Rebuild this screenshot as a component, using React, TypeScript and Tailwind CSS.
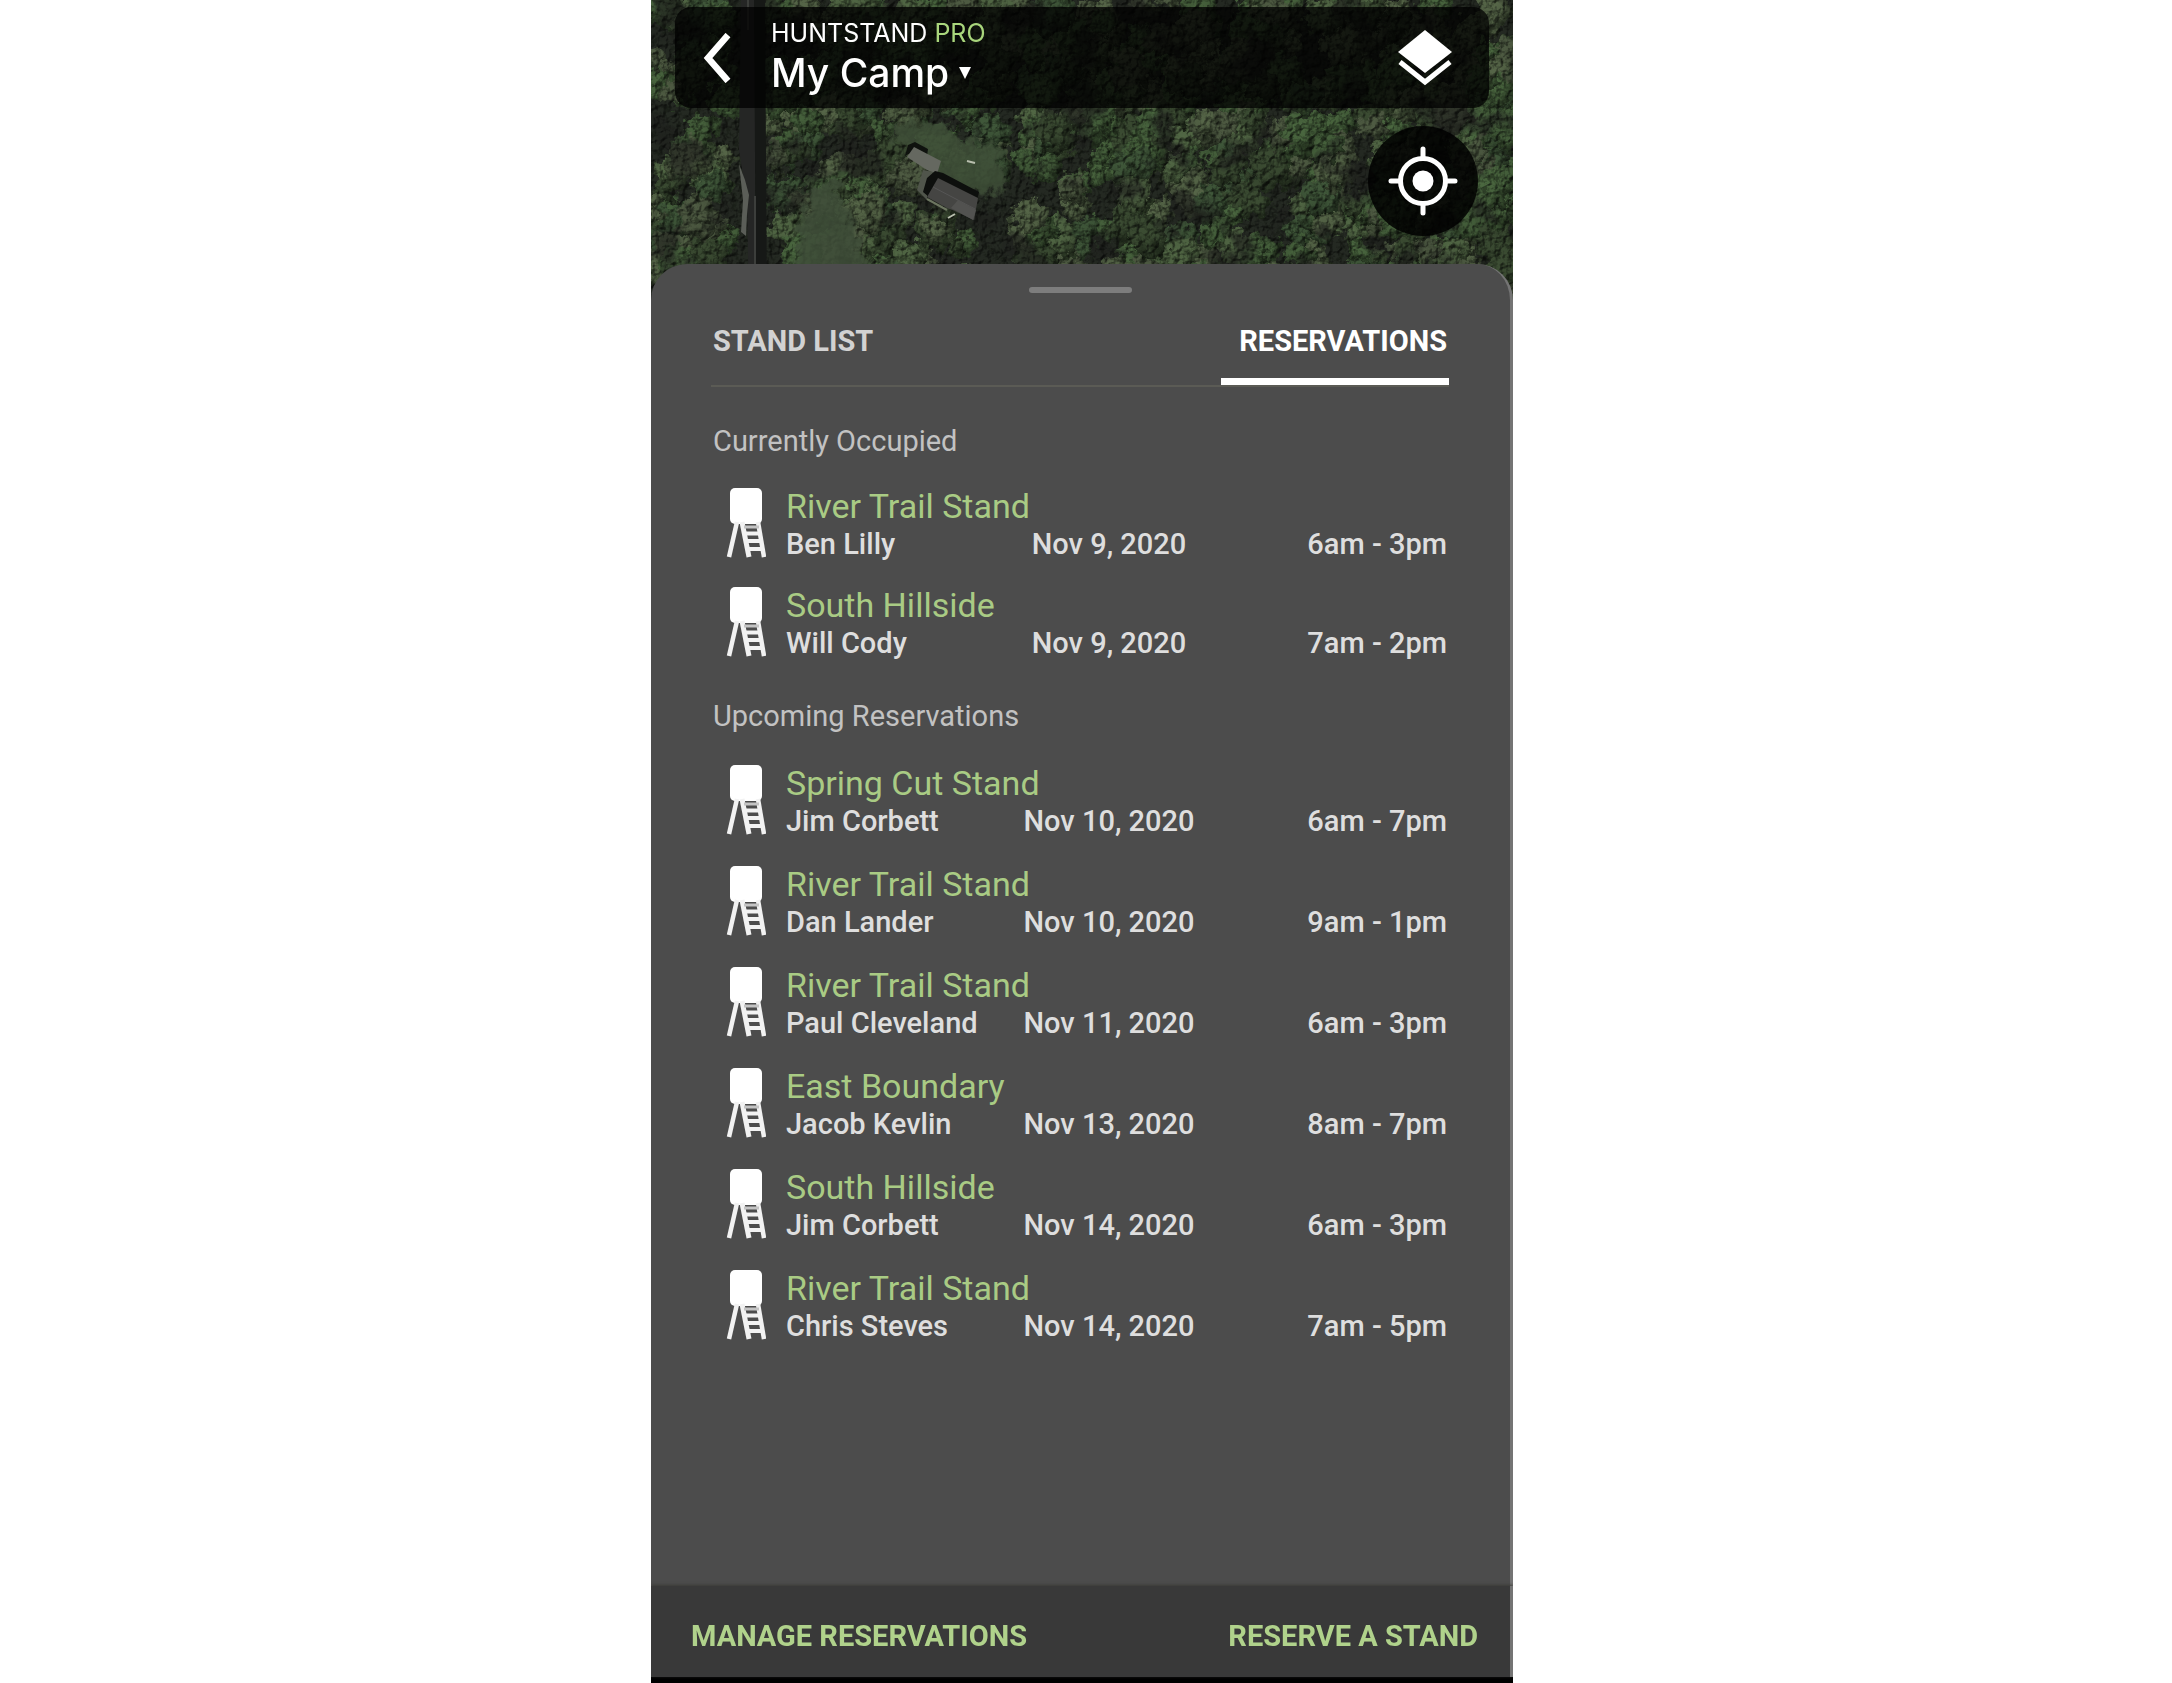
import React from "react";

type Reservation = { stand: string; hunter: string; date: string; time: string };

const occupied: Reservation[] = [
  { stand: "River Trail Stand", hunter: "Ben Lilly", date: "Nov 9, 2020", time: "6am - 3pm" },
  { stand: "South Hillside", hunter: "Will Cody", date: "Nov 9, 2020", time: "7am - 2pm" },
];

const upcoming: Reservation[] = [
  { stand: "Spring Cut Stand", hunter: "Jim Corbett", date: "Nov 10, 2020", time: "6am - 7pm" },
  { stand: "River Trail Stand", hunter: "Dan Lander", date: "Nov 10, 2020", time: "9am - 1pm" },
  { stand: "River Trail Stand", hunter: "Paul Cleveland", date: "Nov 11, 2020", time: "6am - 3pm" },
  { stand: "East Boundary", hunter: "Jacob Kevlin", date: "Nov 13, 2020", time: "8am - 7pm" },
  { stand: "South Hillside", hunter: "Jim Corbett", date: "Nov 14, 2020", time: "6am - 3pm" },
  { stand: "River Trail Stand", hunter: "Chris Steves", date: "Nov 14, 2020", time: "7am - 5pm" },
];

// Small seeded generator so the canopy looks the same on every load.
function makeRandom(seed: number) {
  let s = seed;
  return () => {
    s = (s * 1664525 + 1013904223) % 4294967296;
    return s / 4294967296;
  };
}

const canopyColors = ["#4b6840", "#46613c", "#526845", "#40583a", "#4f5c43", "#566648", "#3c4d33"];

function buildCanopy() {
  const rnd = makeRandom(42);
  const trees: { x: number; y: number; r: number; c: string }[] = [];
  for (let i = 0; i < 640; i++) {
    const x = rnd() * 862;
    const y = rnd() * 310;
    const r = 9 + rnd() * 13;
    const c = canopyColors[Math.floor(rnd() * canopyColors.length)];
    const onRoad = x > 78 && x < 114;
    const inShade = x > 345 && x < 372 && y > 90;
    const southShade = x > 318 && x < 366 && y > 192;
    if (!onRoad && !inShade && !southShade) trees.push({ x, y, r, c });
  }
  return trees;
}

const canopy = buildCanopy();

function AerialMap() {
  return (
    <svg
      className="absolute inset-x-0 top-0 h-[310px] w-full"
      viewBox="0 0 862 310"
      preserveAspectRatio="xMidYMid slice"
      colorInterpolationFilters="sRGB"
      aria-hidden="true"
    >
      <defs>
        <filter id="rough" x="-5%" y="-5%" width="110%" height="110%">
          <feTurbulence type="fractalNoise" baseFrequency="0.08" numOctaves="4" seed="4" result="n" />
          <feDisplacementMap in="SourceGraphic" in2="n" scale="26" xChannelSelector="R" yChannelSelector="G" />
        </filter>
        <filter id="frayed" x="-10%" y="-10%" width="120%" height="120%">
          <feTurbulence type="fractalNoise" baseFrequency="0.09" numOctaves="4" seed="12" result="n" />
          <feGaussianBlur in="SourceGraphic" stdDeviation="2" result="soft" />
          <feDisplacementMap in="soft" in2="n" scale="26" xChannelSelector="R" yChannelSelector="G" />
        </filter>
        <filter id="relief" x="0" y="0" width="100%" height="100%">
          <feTurbulence type="fractalNoise" baseFrequency="0.15" numOctaves="4" seed="9" result="n" />
          <feDiffuseLighting in="n" surfaceScale="5" diffuseConstant="1.2" lightingColor="#fff">
            <feDistantLight azimuth="225" elevation="54" />
          </feDiffuseLighting>
        </filter>
        <filter id="leaves" x="0" y="0" width="100%" height="100%">
          <feTurbulence type="fractalNoise" baseFrequency="0.16" numOctaves="4" seed="15" />
          <feColorMatrix values="0 0 0 0 0.07  0 0 0 0 0.09  0 0 0 0 0.06  5 0 0 0 -2.6" />
        </filter>
        <filter id="patches" x="0" y="0" width="100%" height="100%">
          <feTurbulence type="fractalNoise" baseFrequency="0.022" numOctaves="5" seed="7" />
          <feColorMatrix values="0 0 0 0 0.12  0 0 0 0 0.125  0 0 0 0 0.115  0 0 7 0 -3.9" />
        </filter>
        <radialGradient id="crown" cx="0.4" cy="0.35" r="0.65">
          <stop offset="0" stopColor="#000" stopOpacity="0" />
          <stop offset="0.6" stopColor="#000" stopOpacity="0.08" />
          <stop offset="1" stopColor="#0c110a" stopOpacity="0.6" />
        </radialGradient>
      </defs>
      <rect width="862" height="310" fill="#242922" />
      <g filter="url(#rough)">
        {canopy.map((t, i) => (
          <g key={i}>
            <circle cx={t.x} cy={t.y} r={t.r} fill={t.c} />
            <circle cx={t.x} cy={t.y} r={t.r} fill="url(#crown)" />
          </g>
        ))}
      </g>
      <rect width="862" height="310" filter="url(#leaves)" opacity="0.45" />
      <rect width="862" height="310" filter="url(#patches)" opacity="0.65" />
      <rect width="862" height="310" filter="url(#relief)" opacity="0.65" className="mix-blend-multiply" />
      <g filter="url(#frayed)" opacity="0.85">
        <path d="M160 190 L182 180 L198 208 L216 262 L230 320 L150 320 L146 240 Z" fill="#3f4e39" />
        <path d="M244 122 L290 124 L306 136 L350 148 L352 192 L332 194 L288 180 L266 152 L244 142 Z" fill="#3f4f38" />
      </g>
      <path d="M90 0 H104 L104 190 L106 310 H98 L96 200 L88 150 Z" fill="#252625" />
      <path d="M103 0 H114 L116 310 H105 Z" fill="#161816" />
      <path d="M88 164 L94 180 L98 195 L96 214 L95 236 L90 232 L92 200 Z" fill="#5b5e58" />
      <path d="M97 0 V30 M104 196 V310" stroke="#3c3e3b" strokeWidth="2" />
      <path d="M254 156 L257 145 L264 142 L277 149 L276 156 L262 152 Z" fill="#0f120e" />
      <path d="M256 157 L263 147 L290 161 L286 174 L276 170 Z" fill="#656860" />
      <path d="M272 170 L282 172 L276 184 L276 200 L266 190 Z" fill="#50554b" />
      <path d="M272 192 L276 178 L284 171 L292 173 L328 192 L326 200 L286 182 L278 197 Z" fill="#0d0f0d" />
      <path d="M276 197 L287 178 L327 198 L323 220 L304 211 L296 208 Z" fill="#454543" />
      <path d="M282 187 L324 209" stroke="#555" strokeWidth="1" />
      <path d="M300 208 L307 200 L325 210 L322 220 Z" fill="#525250" />
      <path d="M276 199 L296 210" stroke="#6c7560" strokeWidth="2" />
      <path d="M316 161 L324 163 M297 218 L304 214" stroke="#b9bfae" strokeWidth="2" />
    </svg>
  );
}

function StandIcon() {
  return (
    <svg className="mt-0.5 h-[70px] w-10 shrink-0" viewBox="0 0 40 70" fill="none" aria-hidden="true">
      <rect x="4" y="0" width="32" height="36" rx="5" fill="#fff" />
      <path d="M11 34 L3 69" stroke="#f2f2f2" strokeWidth="4.5" />
      <path d="M16 34 L23 69" stroke="#f2f2f2" strokeWidth="5" />
      <path d="M32 34 L38 69" stroke="#f2f2f2" strokeWidth="4.5" />
      <path d="M18 39 H33" stroke="#c4c4c4" strokeWidth="3" />
      <path d="M19 45.500 H35 M20 53 H36 M21 61 H37" stroke="#f2f2f2" strokeWidth="4" />
    </svg>
  );
}

function ReservationRow({ item }: { item: Reservation }) {
  return (
    <li className="flex gap-5 pl-[15px]">
      <StandIcon />
      <div className="grid flex-1 grid-cols-[236px_174px_1fr] whitespace-nowrap text-[29px] leading-9 font-medium text-[#dedede]">
        <h3 className="col-span-3 text-[34px] leading-10 font-normal text-[#a9cb84]">{item.stand}</h3>
        <p>{item.hunter}</p>
        <p className="text-center">{item.date}</p>
        <p className="pr-0.5 text-right">{item.time}</p>
      </div>
    </li>
  );
}

export default function App() {
  return (
    <div className="flex min-h-screen justify-center bg-white pr-2 font-['Roboto',sans-serif]">
      <main className="relative flex w-full max-w-[862px] flex-col overflow-hidden bg-black pb-1.5">
        <AerialMap />
        <header className="relative flex h-[264px] shrink-0 flex-col px-6 pt-[7px] font-['Inter',sans-serif]">
          <div className="flex h-[101px] items-center rounded-2xl bg-black/75 pr-9 pl-7">
            <button type="button" aria-label="Back" className="shrink-0">
              <svg className="h-[50px] w-7" viewBox="0 0 28 50" fill="none" aria-hidden="true">
                <path d="M25 2 L5 25 L25 48" stroke="#fff" strokeWidth="6.500" />
              </svg>
            </button>
            <div className="ml-10 flex-1 pb-0.5 text-white">
              <p className="text-[25px] leading-8">
                HUNTSTAND <span className="text-[#a9d67c]">PRO</span>
              </p>
              <button type="button" className="flex items-center gap-2.5 text-[39px] leading-[48px] font-medium">
                My Camp
                <svg className="h-3 w-3" viewBox="0 0 12 12" aria-hidden="true">
                  <path d="M0 0 H12 L6 12 Z" fill="#fff" />
                </svg>
              </button>
            </div>
            <button type="button" aria-label="Map layers" className="shrink-0">
              <svg className="h-14 w-14" viewBox="0 0 56 56" aria-hidden="true">
                <path d="M28 0 L55 22 L28 43 L1 22 Z" fill="#fff" />
                <path d="M3 32 L28 52 L53 32" fill="none" stroke="#fff" strokeWidth="5" />
              </svg>
            </button>
          </div>
          <button
            type="button"
            aria-label="Show my location"
            className="mt-[18px] mr-[11px] flex size-[110px] items-center justify-center self-end rounded-full bg-black/85"
          >
            <svg className="size-[70px]" viewBox="0 0 70 70" fill="none" stroke="#fff" strokeLinecap="round" aria-hidden="true">
              <circle cx="35" cy="35" r="22.500" strokeWidth="5" />
              <circle cx="35" cy="35" r="10.500" fill="#fff" stroke="none" />
              <path d="M35 3 V12 M35 58 V67 M3 35 H12 M58 35 H67" strokeWidth="5" />
            </svg>
          </button>
        </header>

        <section className="relative flex flex-1 flex-col rounded-t-[36px] border-r-[3px] border-[#747474] bg-[#4c4c4c] pt-[23px] pr-[61px] pl-[60px]">
          <div className="h-1.5 w-[103px] self-center rounded-full bg-[#7d7d7d]" />
          <div role="tablist" className="mt-[30px] flex justify-between border-b-2 border-[#5b5b55] text-[29px] leading-9 font-bold">
            <button type="button" role="tab" aria-selected="false" className="pb-[26px] pl-0.5 text-[#d2d2d2]">
              STAND LIST
            </button>
            <button type="button" role="tab" aria-selected="true" className="border-b-[7px] border-white pr-0.5 pb-[19px] pl-[18px] text-white">
              RESERVATIONS
            </button>
          </div>

          <h2 className="mt-9 pl-0.5 text-[29px] leading-9 text-[#c2c2c2]">Currently Occupied</h2>
          <ul className="mt-[27px] flex flex-col gap-[23px]">
            {occupied.map((r) => (
              <ReservationRow key={r.stand + r.date} item={r} />
            ))}
          </ul>

          <h2 className="mt-[37px] pl-0.5 text-[29px] leading-9 text-[#c2c2c2]">Upcoming Reservations</h2>
          <ul className="mt-[29px] flex flex-col gap-[25px]">
            {upcoming.map((r) => (
              <ReservationRow key={r.stand + r.date} item={r} />
            ))}
          </ul>
        </section>

        <footer className="relative flex h-[91px] shrink-0 items-center justify-between border-r-[3px] border-[#747474] bg-[#393939] pt-2 pr-8 pl-10 text-[29px] leading-9 font-bold text-[#b0d28b] shadow-[0_-1px_3px_#3a3a36]">
          <button type="button">MANAGE RESERVATIONS</button>
          <button type="button">RESERVE A STAND</button>
        </footer>
      </main>
    </div>
  );
}
